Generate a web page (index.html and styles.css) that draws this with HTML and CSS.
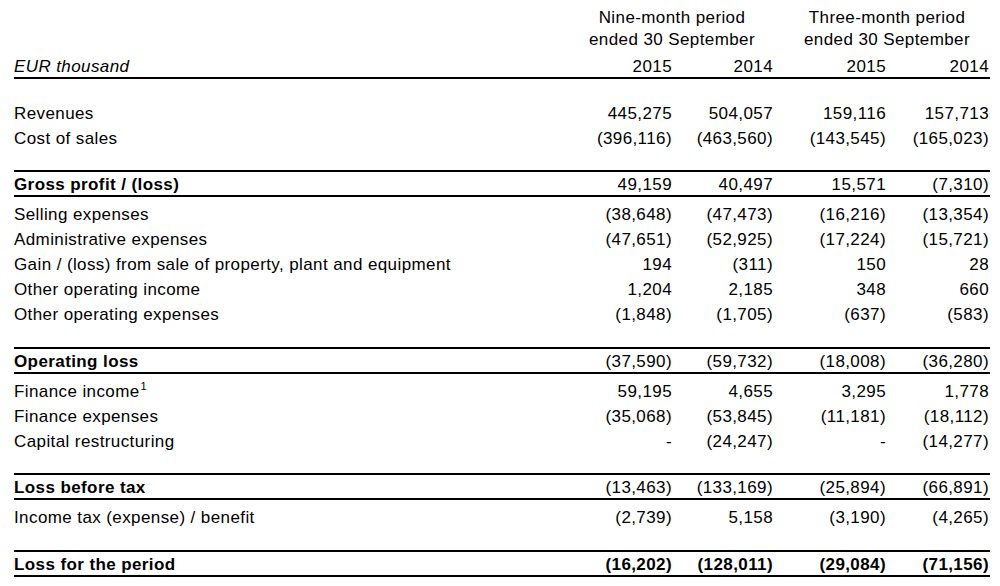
FILE: index.html
```html
<!DOCTYPE html>
<html lang="en">
<head>
<meta charset="utf-8">
<title>Income statement</title>
<link rel="stylesheet" href="styles.css">
</head>
<body>
<div class="statement">
  <div class="head">
    <div class="row head-groups">
      <div class="group group-a">Nine-month period<br>ended 30 September</div>
      <div class="group group-b">Three-month period<br>ended 30 September</div>
    </div>
    <div class="row head-years">
      <div class="label unit">EUR thousand</div>
      <div class="num">2015</div>
      <div class="num">2014</div>
      <div class="num">2015</div>
      <div class="num">2014</div>
    </div>
  </div>

  <div class="section section-first">
    <div class="row"><div class="label">Revenues</div><div class="num">445,275</div><div class="num">504,057</div><div class="num">159,116</div><div class="num">157,713</div></div>
    <div class="row"><div class="label">Cost of sales</div><div class="num">(396,116)</div><div class="num">(463,560)</div><div class="num">(143,545)</div><div class="num">(165,023)</div></div>
  </div>

  <div class="row total"><div class="label">Gross profit / (loss)</div><div class="num">49,159</div><div class="num">40,497</div><div class="num">15,571</div><div class="num">(7,310)</div></div>

  <div class="section">
    <div class="row"><div class="label">Selling expenses</div><div class="num">(38,648)</div><div class="num">(47,473)</div><div class="num">(16,216)</div><div class="num">(13,354)</div></div>
    <div class="row"><div class="label">Administrative expenses</div><div class="num">(47,651)</div><div class="num">(52,925)</div><div class="num">(17,224)</div><div class="num">(15,721)</div></div>
    <div class="row"><div class="label">Gain / (loss) from sale of property, plant and equipment</div><div class="num">194</div><div class="num">(311)</div><div class="num">150</div><div class="num">28</div></div>
    <div class="row"><div class="label">Other operating income</div><div class="num">1,204</div><div class="num">2,185</div><div class="num">348</div><div class="num">660</div></div>
    <div class="row"><div class="label">Other operating expenses</div><div class="num">(1,848)</div><div class="num">(1,705)</div><div class="num">(637)</div><div class="num">(583)</div></div>
  </div>

  <div class="row total"><div class="label">Operating loss</div><div class="num">(37,590)</div><div class="num">(59,732)</div><div class="num">(18,008)</div><div class="num">(36,280)</div></div>

  <div class="section section-short">
    <div class="row"><div class="label">Finance income<sup class="note">1</sup></div><div class="num">59,195</div><div class="num">4,655</div><div class="num">3,295</div><div class="num">1,778</div></div>
    <div class="row"><div class="label">Finance expenses</div><div class="num">(35,068)</div><div class="num">(53,845)</div><div class="num">(11,181)</div><div class="num">(18,112)</div></div>
    <div class="row"><div class="label">Capital restructuring</div><div class="num">-</div><div class="num">(24,247)</div><div class="num">-</div><div class="num">(14,277)</div></div>
  </div>

  <div class="row total"><div class="label">Loss before tax</div><div class="num">(13,463)</div><div class="num">(133,169)</div><div class="num">(25,894)</div><div class="num">(66,891)</div></div>

  <div class="section">
    <div class="row"><div class="label">Income tax (expense) / benefit</div><div class="num">(2,739)</div><div class="num">5,158</div><div class="num">(3,190)</div><div class="num">(4,265)</div></div>
  </div>

  <div class="row total final"><div class="label">Loss for the period</div><div class="num">(16,202)</div><div class="num">(128,011)</div><div class="num">(29,084)</div><div class="num">(71,156)</div></div>
</div>
</body>
</html>
```

FILE: styles.css
```css
* {
  box-sizing: border-box;
}

html, body {
  margin: 0;
  padding: 0;
  background: #ffffff;
}

body {
  font-family: "Liberation Sans", Arial, sans-serif;
  font-size: 17px;
  color: #000000;
  letter-spacing: 0.4px;
}

.statement {
  width: 976px;
  margin-left: 14px;
  padding-top: 7px;
}

.row {
  display: grid;
  grid-template-columns: 1fr 101px 101px 113px 103px;
  padding-right: 1px;
  line-height: 25px;
}

.label {
  white-space: nowrap;
}

.num {
  text-align: right;
  white-space: nowrap;
}

/* header */
.head {
  border-bottom: 2px solid #000;
}

.head-groups {
  line-height: 22px;
}

.group {
  text-align: center;
  white-space: nowrap;
}

.group-a {
  grid-column: 2 / 4;
}

.group-b {
  grid-column: 4 / 6;
  padding-left: 12px;
}

.head-years {
  margin-top: 4px;
  padding-top: 1px;
  line-height: 21px;
}

.unit {
  font-style: italic;
}

/* sections */
.section {
  padding-top: 5px;
  padding-bottom: 20px;
}

.section-first {
  padding-top: 22px;
  padding-bottom: 19px;
}

.section-short {
  padding-bottom: 19px;
}

.total {
  font-weight: bold;
  border-top: 2px solid #000;
  border-bottom: 2px solid #000;
  padding-top: 3px;
  line-height: 20px;
  height: 27px;
}

.total .num {
  font-weight: normal;
}

.final .num {
  font-weight: bold;
}

.note {
  font-size: 11px;
  line-height: 0;
  vertical-align: 7px;
  margin-left: 1px;
}
```
